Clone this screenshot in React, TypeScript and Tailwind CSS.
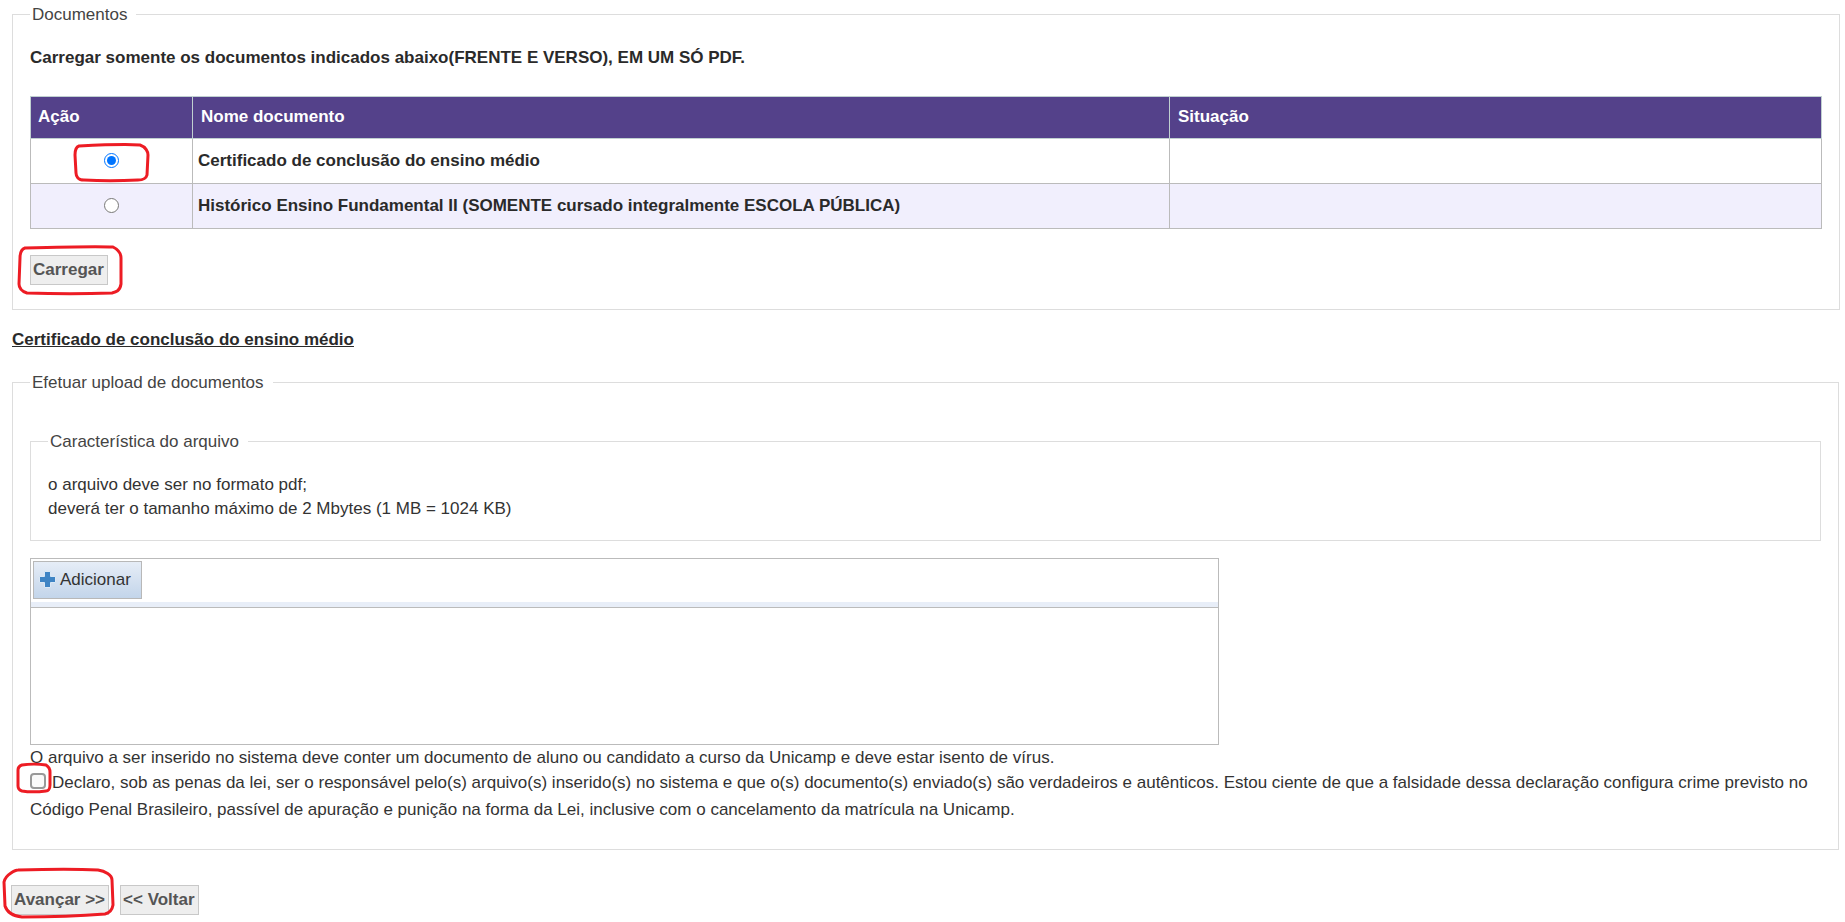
const Btn = ({ label }: { label: string }) => (
  <button className="h-[30px] border border-[#c8c8c8] bg-[#eeeeee] pl-[2px] pr-[3px] text-[17px] font-bold text-[#555555]">{label}</button>
);

export default function App() {
  return (
    <div className="relative h-[922px] overflow-hidden bg-white px-3 pt-[4px] text-[17px] leading-[1.2] text-[#333333] font-['Liberation_Sans',Arial,sans-serif]">
      <fieldset className="mr-[-6px] h-[306px] border border-[#dddddd] px-[17px] pt-[24px]">
        <legend className="translate-y-px pl-[2px] pr-[9px] text-[#444444]">Documentos</legend>
        <p className="font-bold text-[#2a2a2a]">Carregar somente os documentos indicados abaixo(FRENTE E VERSO), EM UM SÓ PDF.</p>
        <table className="mt-[27px] w-[1792px] table-fixed border-collapse">
          <thead>
            <tr className="h-[42px] bg-[#54418a] text-left font-bold text-white">
              <th className="w-[162px] border border-[#c0d0d0] px-[7px]">Ação</th>
              <th className="w-[977px] border border-[#c0d0d0] px-[8px]">Nome documento</th>
              <th className="border border-[#c0d0d0] px-[8px]">Situação</th>
            </tr>
          </thead>
          <tbody className="font-bold text-[#2a2a2a]">
            <tr className="h-[45px]">
              <td className="border border-[#bbbbbb] text-center"><input type="radio" name="doc" defaultChecked className="m-0 mb-[2px] size-[15px] align-middle" /></td>
              <td className="border border-[#bbbbbb] px-[5px]">Certificado de conclusão do ensino médio</td>
              <td className="border border-[#bbbbbb]"></td>
            </tr>
            <tr className="h-[45px] bg-[#f1effd]">
              <td className="border border-[#bbbbbb] text-center"><input type="radio" name="doc" className="m-0 mb-[2px] size-[15px] align-middle" /></td>
              <td className="border border-[#bbbbbb] px-[5px]">Histórico Ensino Fundamental II (SOMENTE cursado integralmente ESCOLA PÚBLICA)</td>
              <td className="border border-[#bbbbbb]"></td>
            </tr>
          </tbody>
        </table>
        <div className="mt-[26px]"><Btn label="Carregar" /></div>
      </fieldset>

      <p className="mt-[20px] font-bold text-[#2a2a2a] underline">Certificado de conclusão do ensino médio</p>

      <fieldset className="mr-[-6px] mt-[22px] h-[478px] border border-[#dddddd] px-[17px] pt-[39px]">
        <legend className="translate-y-px pl-[2px] pr-[9px] text-[#444444]">Efetuar upload de documentos</legend>
        <fieldset className="h-[109px] border border-[#dddddd] px-[17px] pt-[21px]">
          <legend className="pl-[2px] pr-[9px] text-[#444444]">Característica do arquivo</legend>
          <p className="leading-[24px]">o arquivo deve ser no formato pdf;<br />deverá ter o tamanho máximo de 2 Mbytes (1 MB = 1024 KB)</p>
        </fieldset>
        <div className="mt-[17px] h-[187px] w-[1189px] border border-[#bbbbbb]">
          <div className="h-[49px] border-b border-[#bbbbbb] pt-[2px]">
            <div className="h-[46px] bg-[linear-gradient(#ffffff_0_41px,#e8eef8_41px)] pl-[2px]">
              <button className="flex h-[38px] w-[109px] items-center gap-[3px] border border-[#b8b8b8] bg-[linear-gradient(#e6edf7,#c3d5ea)] pl-[4px] text-[#333333]">
                <svg width="19" height="19" viewBox="0 0 19 19" strokeLinejoin="round"><path d="M6.5 1.5h6v5h5v6h-5v5h-6v-5h-5v-6h5z" fill="#3f84c4" stroke="#dbe8f5" /></svg>
                Adicionar
              </button>
            </div>
          </div>
        </div>
        <p className="-mb-px pt-px leading-[24px]">O arquivo a ser inserido no sistema deve conter um documento de aluno ou candidato a curso da Unicamp e deve estar isento de vírus.</p>
        <p className="leading-[27px]">
          <input type="checkbox" className="m-0 mb-[4px] mr-[6px] size-[16px] appearance-none rounded-[4px] border-2 border-[#999999] bg-[#fafafa] align-middle" />
          Declaro, sob as penas da lei, ser o responsável pelo(s) arquivo(s) inserido(s) no sistema e que o(s) documento(s) enviado(s) são verdadeiros e autênticos. Estou ciente de que a falsidade dessa declaração configura crime previsto no Código Penal Brasileiro, passível de apuração e punição na forma da Lei, inclusive com o cancelamento da matrícula na Unicamp.
        </p>
      </fieldset>

      <div className="ml-[-1px] mt-[35px] flex gap-[11px]">
        <Btn label="Avançar >>" />
        <Btn label="<< Voltar" />
      </div>

      {/* marcações em vermelho por cima da tela */}
      <svg className="pointer-events-none absolute left-0 top-0" width="1845" height="922" viewBox="0 0 1845 922" fill="none" stroke="#ed1c24" strokeWidth="3" strokeLinejoin="round">
        <path d="M79 146C100 145 125 144 140 145C146 147 148 152 148 155L147 175C146 179 141 180 138 180C120 181 100 181 84 180C78 180 76 176 76 173L75 155C75 150 76 147 79 146Z" />
        <path d="M25 248C60 247 95 246 113 247C119 250 121 254 121 258L121 284C120 291 116 292 112 293C85 294 55 294 27 293C21 291 19 287 19 284L20 258C20 252 22 249 25 248Z" />
        <path d="M22 765C28 764 40 764 46 765C49 767 50 769 50 772L50 785C50 789 48 791 46 791C38 792 28 792 22 791C19 790 18 788 18 786L18 770C18 767 19 766 22 765Z" />
        <path d="M11 873C14 871 16 870 18 870C50 869 80 869 98 870C105 871 112 875 112 880L113 905C112 911 109 913 105 914C80 916 50 917 22 917C12 916 7 912 5 906L4 882C5 877 8 875 11 873Z" />
      </svg>
    </div>
  );
}
